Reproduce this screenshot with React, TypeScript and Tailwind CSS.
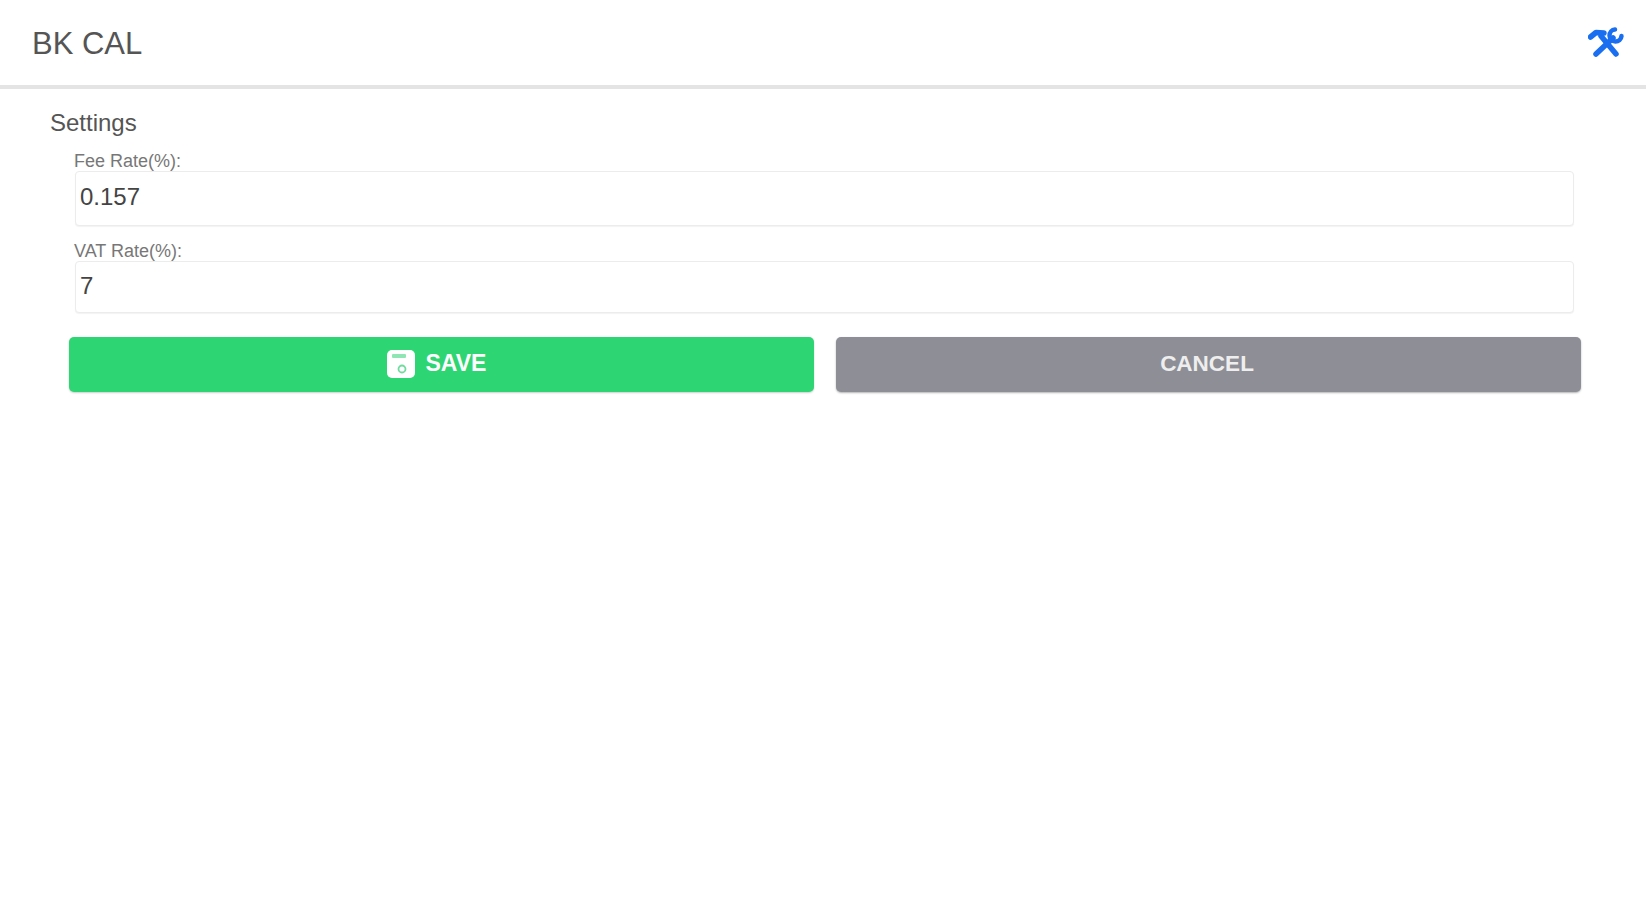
const ToolsIcon = () => {
  return (
    <svg viewBox="0 0 36 32" className="w-[36px] h-[32px] text-[#1a6ff0]" fill="none" stroke="currentColor" strokeLinecap="round" strokeLinejoin="round">
      <path d="M13 9 L28 27" strokeWidth="5.5" />
      <path d="M2.5 10 L8 5.5 L16 6" strokeWidth="5.5" />
      <path d="M25 11 L8 27" strokeWidth="5.5" />
      <path d="M27 2.5 A6 6 0 1 0 33.5 9" strokeWidth="4.5" />
    </svg>
  );
};

const SaveIcon = () => {
  return (
    <svg viewBox="0 0 28 28" className="w-[28px] h-[28px]">
      <rect x="0" y="0" width="28" height="28" rx="5" fill="#ffffff" />
      <rect x="5" y="4" width="14" height="4" rx="1" fill="#8fe6b4" />
      <circle cx="15" cy="19" r="3.5" fill="none" stroke="#6fdc9d" strokeWidth="1.8" />
    </svg>
  );
};

const Field = ({ label, value, height }: { label: string; value: string; height: string }) => {
  return (
    <div className="pl-[75px] pr-[72px]">
      <label className="block -ml-[1px] text-[18px] leading-[20px] text-[#777]">{label}</label>
      <input
        readOnly
        value={value}
        className={`block w-full ${height} px-[4px] pb-[3px] text-[24px] text-[#444] bg-white border border-[#ececec] rounded-[4px] outline-none shadow-[0_1px_1px_rgba(0,0,0,0.05)]`}
      />
    </div>
  );
};

export default function App() {
  return (
    <div className="min-h-[900px] bg-white font-['Liberation_Sans',Arial,sans-serif]">
      <header className="flex h-[85px] items-center justify-between pl-[32px] pr-[22px] border-b-[4px] border-[#e4e4e4] box-content">
        <h1 className="pt-[3px] text-[31px] leading-[46px] font-normal text-[#555]">BK CAL</h1>
        <ToolsIcon />
      </header>

      <h2 className="pl-[50px] pt-[20px] text-[24px] leading-[28px] font-normal text-[#555]">Settings</h2>

      <div className="mt-[14px] flex flex-col gap-[15px]">
        <Field label="Fee Rate(%):" value="0.157" height="h-[55px]" />
        <Field label="VAT Rate(%):" value="7" height="h-[52px]" />
      </div>

      <div className="mt-[24px] pl-[69px] pr-[65px] grid grid-cols-2 gap-[22px]">
        <button className="flex h-[55px] items-center justify-center gap-[11px] pr-[10px] pb-[2px] rounded-[5px] bg-[#2ed573] text-[23px] font-bold text-white shadow-[0_1px_2px_rgba(0,0,0,0.2)]">
          <SaveIcon />
          SAVE
        </button>
        <button className="flex h-[55px] items-center justify-center pr-[3px] pb-[2px] rounded-[5px] bg-[#8e8f96] text-[22.5px] font-bold text-[#eee] shadow-[0_1px_2px_rgba(0,0,0,0.3)]">
          CANCEL
        </button>
      </div>
    </div>
  );
}
